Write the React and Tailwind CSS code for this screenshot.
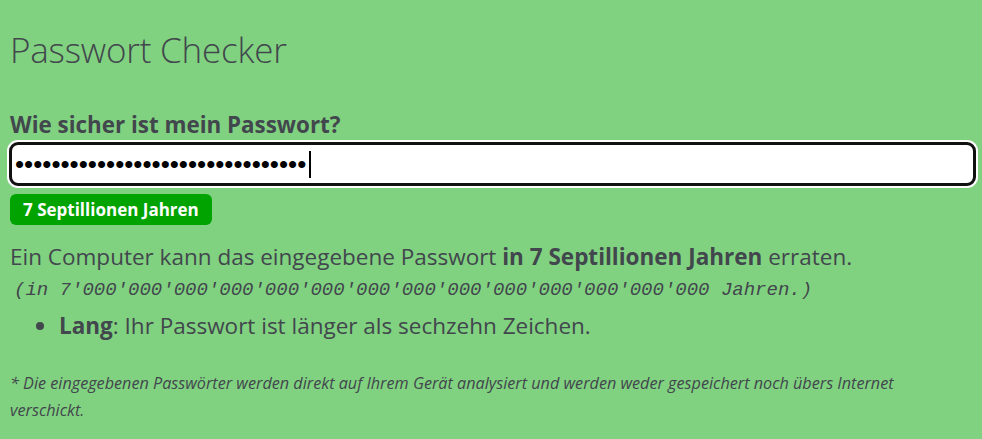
export default function App() {
  const dots = '•'.repeat(32);

  return (
    <div className="min-h-screen bg-[#80d280] text-[#42464d] px-[10px] pt-[27px] font-['Open_Sans',sans-serif]">
      <h1 className="text-[35px] font-light leading-[46px] tracking-[-0.2px]">Passwort Checker</h1>

      <label className="block mt-[37px] text-[22.4px] font-bold leading-[30px]">Wie sicher ist mein Passwort?</label>

      <div className="-ml-[1px] -mr-[4px] mt-[2px] rounded-[9px] bg-white border-[3px] border-[#111] shadow-[0_0_0_2px_white] h-[44px] flex items-center px-[3px]">
        <span className="font-['Liberation_Sans',sans-serif] text-[26px] leading-none text-black">{dots}</span>
        <span className="w-[2px] h-[27px] bg-black ml-[3px]"></span>
      </div>

      <div className="mt-[8px] inline-flex items-center h-[31px] px-[13px] rounded-[6px] bg-[#00a300] text-white text-[17px] font-bold">
        7 Septillionen Jahren
      </div>

      <p className="mt-[16px] text-[22.5px] leading-[32px]">
        Ein Computer kann das eingegebene Passwort <strong>in 7 Septillionen Jahren</strong> erraten.
      </p>
      <p className="font-['Liberation_Mono',monospace] italic text-[19px] leading-[26px] pl-[4px] mt-[4px]">
        (in 7'000'000'000'000'000'000'000'000'000'000'000'000'000'000 Jahren.)
      </p>

      <ul className="mt-[7px] list-disc pl-[49px] text-[22.5px] leading-[32px]">
        <li><strong>Lang</strong>: Ihr Passwort ist länger als sechzehn Zeichen.</li>
      </ul>

      <p className="mt-[28px] text-[16.2px] italic leading-[27px]">
        * Die eingegebenen Passwörter werden direkt auf Ihrem Gerät analysiert und werden weder gespeichert noch übers Internet verschickt.
      </p>
    </div>
  );
}
